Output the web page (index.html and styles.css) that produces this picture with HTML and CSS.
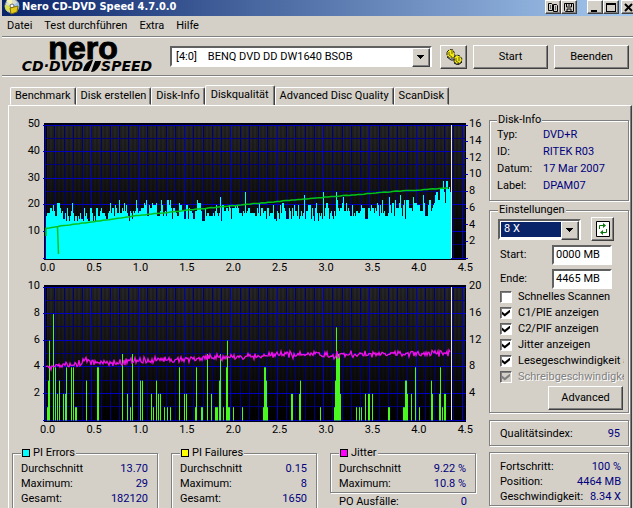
FILE: index.html
```html
<!DOCTYPE html>
<html lang="de">
<head>
<meta charset="utf-8">
<title>Nero CD-DVD Speed 4.7.0.0</title>
<link rel="stylesheet" href="styles.css">
</head>
<body>
<div class="window">
  <header class="titlebar">
    <svg class="app-icon" width="16" height="16" viewBox="0 0 16 16" aria-hidden="true">
      <circle cx="8" cy="6" r="7" fill="#d8dcc8" stroke="#8a94a0"/>
      <path d="M8 6 2 1A8 8 0 0 1 8-1Z" fill="#f4f4b0"/>
      <path d="M8 6 14 2A7 7 0 0 1 14 9Z" fill="#9fc4e8"/>
      <path d="M8 6 1 5A7 7 0 0 0 4 12Z" fill="#d8e04c"/>
      <circle cx="8" cy="6" r="2" fill="#fff" stroke="#667"/>
      <path d="M6 8 14 6 13 12 7 14Z" fill="#e4c818" stroke="#7c6c10"/>
    </svg>
    <h1 class="title">Nero CD-DVD Speed 4.7.0.0</h1>
    <div class="title-group">
      <button class="title-btn" aria-label="Kopieren"><svg width="10" height="9" viewBox="0 0 10 9"><path d="M.5.5h3l1 1v6h-4zM5.5 1.5h3l1 1v6h-4zM2 3h1M2 5h1M7 4h1M7 6h1" fill="none" stroke="#000"/></svg></button>
      <button class="title-btn" aria-label="Speichern"><svg width="10" height="9" viewBox="0 0 10 9"><path d="M.5.5h9v8h-8l-1-1zM2.500 1v3h5V1M3 8V6h4v2M4 2h2" fill="none" stroke="#000"/></svg></button>
    </div>
    <div class="title-group">
      <button class="title-btn" aria-label="Minimieren"><svg width="10" height="9" viewBox="0 0 10 9"><path d="M1 7h6v2H1z"/></svg></button>
      <button class="title-btn" aria-label="Maximieren"><svg width="10" height="9" viewBox="0 0 10 9"><path d="M0 0h10v9H0zM1 2v6h8V2z" fill-rule="evenodd"/></svg></button>
    </div>
    <button class="title-btn" aria-label="Schließen"><svg width="10" height="9" viewBox="0 0 10 9"><path d="m1 1 7 7M8 1 1 8" stroke="#000" stroke-width="2"/></svg></button>
  </header>

  <nav class="menu">
    <button>Datei</button><button>Test durchführen</button><button>Extra</button><button>Hilfe</button>
  </nav>

  <div class="toolbar">
    <div class="logo">
      <span class="logo-name">nero</span>
      <span class="logo-product"><span>CD·DVD</span><svg width="18" height="12" viewBox="0 0 18 12" aria-hidden="true"><path d="M0 11C1 5 5 0 10 0L6 11ZM8 12 12 1H18C17 7 13 12 8 12Z"/><path d="m5 12 7-12" stroke="#d4d0c8"/></svg><span>SPEED</span></span>
    </div>
    <span class="combo combo-drive"><select aria-label="Laufwerk"><option>[4:0]&nbsp;&nbsp;&nbsp; BENQ DVD DD DW1640 BSOB</option></select></span>
    <div class="toolbar-buttons">
      <button class="btn btn-icon" aria-label="Optionen"><svg width="18" height="16" viewBox="0 0 18 16"><path d="m2 3 2-2 3-1 2 3 1 4-2 2H5L2 7ZM9 8l3-2 3 1 2 3-1 4-4 1-3-2Z" fill="#f0e818" stroke="#222" stroke-dasharray="3 1"/><path d="M4 3v3l3 2M7 1v4M11 9v3l3 2M14 8v4" fill="none" stroke="#6c6408"/><path d="m2 8 4 3 4 0M9 14l4 2 4-3" fill="none" stroke="#111"/></svg></button>
      <button class="btn btn-wide">Start</button>
      <button class="btn btn-wide">Beenden</button>
    </div>
  </div>

  <div class="tabs" role="tablist">
    <button class="tab" role="tab">Benchmark</button>
    <button class="tab" role="tab">Disk erstellen</button>
    <button class="tab" role="tab">Disk-Info</button>
    <button class="tab tab-active" role="tab" aria-selected="true">Diskqualität</button>
    <button class="tab" role="tab">Advanced Disc Quality</button>
    <button class="tab" role="tab">ScanDisk</button>
  </div>

  <main class="panel">
    <div class="results">
      <div class="chart">
        <div class="axis-y axis-left"><span>50</span><span>40</span><span>30</span><span>20</span><span>10</span><span></span></div>
        <svg class="plot" id="pie-plot" viewBox="0 0 422 137" preserveAspectRatio="none" role="img" aria-label="PI Errors"></svg>
        <div class="axis-y axis-right"><span>16</span><span>14</span><span>12</span><span>10</span><span>8</span><span>6</span><span>4</span><span>2</span><span></span></div>
        <div class="axis-x"><span>0.0</span><span>0.5</span><span>1.0</span><span>1.5</span><span>2.0</span><span>2.5</span><span>3.0</span><span>3.5</span><span>4.0</span><span>4.5</span></div>
      </div>
      <div class="chart">
        <div class="axis-y axis-left"><span>10</span><span>8</span><span>6</span><span>4</span><span>2</span><span></span></div>
        <svg class="plot" id="pif-plot" viewBox="0 0 422 137" preserveAspectRatio="none" role="img" aria-label="PI Failures und Jitter"></svg>
        <div class="axis-y axis-right"><span>20</span><span>16</span><span>12</span><span>8</span><span>4</span><span></span></div>
        <div class="axis-x"><span>0.0</span><span>0.5</span><span>1.0</span><span>1.5</span><span>2.0</span><span>2.5</span><span>3.0</span><span>3.5</span><span>4.0</span><span>4.5</span></div>
      </div>
      <div class="stats">
        <fieldset class="group stat">
          <legend><i class="swatch cyan"></i>PI Errors</legend>
          <dl class="rows"><dt>Durchschnitt</dt><dd>13.70</dd><dt>Maximum:</dt><dd>29</dd><dt>Gesamt:</dt><dd>182120</dd></dl>
        </fieldset>
        <fieldset class="group stat">
          <legend><i class="swatch yellow"></i>PI Failures</legend>
          <dl class="rows"><dt>Durchschnitt</dt><dd>0.15</dd><dt>Maximum:</dt><dd>8</dd><dt>Gesamt:</dt><dd>1650</dd></dl>
        </fieldset>
        <div>
          <fieldset class="group stat">
            <legend><i class="swatch magenta"></i>Jitter</legend>
            <dl class="rows"><dt>Durchschnitt</dt><dd>9.22 %</dd><dt>Maximum:</dt><dd>10.8 %</dd></dl>
          </fieldset>
          <dl class="rows po"><dt>PO Ausfälle:</dt><dd>0</dd></dl>
        </div>
      </div>
    </div>

    <aside class="sidebar">
      <fieldset class="group disk">
        <legend>Disk-Info</legend>
        <dl class="info"><dt>Typ:</dt><dd>DVD+R</dd><dt>ID:</dt><dd>RITEK R03</dd><dt>Datum:</dt><dd>17 Mar 2007</dd><dt>Label:</dt><dd>DPAM07</dd></dl>
      </fieldset>
      <fieldset class="group settings">
        <legend>Einstellungen</legend>
        <div class="speed">
          <span class="combo combo-speed"><select aria-label="Geschwindigkeit"><option>8 X</option></select></span>
          <button class="btn btn-refresh" aria-label="Aktualisieren"><svg width="14" height="16" viewBox="0 0 14 16"><path d="M.5.5h13v15H.5z" fill="#fff" stroke="#000"/><path d="M3.500 8V4.500H8M10.500 8v3.500H6" fill="none" stroke="#087808"/><path d="m7 2 3 2.500L7 7zM7 9l-3 2.500L7 14z" fill="#087808"/></svg></button>
        </div>
        <div class="field"><label for="start">Start:</label><input id="start" type="text" value="0000 MB"></div>
        <div class="field"><label for="ende">Ende:</label><input id="ende" type="text" value="4465 MB"></div>
        <div class="checks">
          <label><input type="checkbox">Schnelles Scannen</label>
          <label><input type="checkbox" checked>C1/PIE anzeigen</label>
          <label><input type="checkbox" checked>C2/PIF anzeigen</label>
          <label><input type="checkbox" checked>Jitter anzeigen</label>
          <label><input type="checkbox" checked>Lesegeschwindigkeit anzeigen</label>
          <label class="off"><input type="checkbox" checked disabled>Schreibgeschwindigkeit anzeigen</label>
        </div>
        <button class="btn btn-wide btn-advanced">Advanced</button>
      </fieldset>
      <section class="group quality"><dl class="rows"><dt>Qualitätsindex:</dt><dd>95</dd></dl></section>
      <section class="group progress"><dl class="rows"><dt>Fortschritt:</dt><dd>100 %</dd></dl><dl class="rows"><dt>Position:</dt><dd>4464 MB</dd></dl><dl class="rows"><dt>Geschwindigkeit:</dt><dd>8.34 X</dd></dl></section>
    </aside>
  </main>
</div>
<script src="charts.js"></script>
</body>
</html>
```
FILE: styles.css
```css
* { box-sizing: border-box; }
html { background: #d4d0c8; }
body {
  margin: 0;
  color: #000;
  background: #d4d0c8;
  font: 11px/14px Roboto, "Liberation Sans", sans-serif;
}
button, select, input { margin: 0; padding: 0; font: inherit; color: inherit; border-radius: 0; }
dl, dd, h1 { margin: 0; }
svg { display: block; }

.window {
  display: flex;
  flex-direction: column;
  min-height: 100vh;
  padding-left: 2px;
  overflow: hidden;
}

/* title bar */
.titlebar {
  display: flex;
  align-items: flex-start;
  gap: 10px;
  height: 16px;
  padding-left: 2px;
  margin-right: -4px;
  overflow: hidden;
  background: linear-gradient(90deg, #0a246a, #a6caf0);
}
.app-icon { flex: none; margin-right: -8px; }
.title {
  flex: 1;
  color: #fff;
  font: bold 11px/14px "DejaVu Sans Condensed", "DejaVu Sans", sans-serif;
  white-space: nowrap;
}
.title-group { display: flex; }
.title-group + .title-btn { margin-left: -8px; }
.title-btn {
  display: flex;
  align-items: center;
  justify-content: center;
  width: 16px;
  height: 14px;
  background: #d4d0c8;
  border: 1px solid;
  border-color: #fff #404040 #404040 #fff;
  box-shadow: inset -1px -1px #808080;
}

/* menu */
.menu {
  display: flex;
  gap: 12px;
  height: 21px;
  padding: 0 5px;
  border-bottom: 1px solid #808080;
}
.menu button { background: none; border: 0; }

/* toolbar */
.toolbar {
  display: flex;
  align-items: center;
  gap: 8px;
  height: 39px;
  padding: 0 4px 0 10px;
  border-top: 1px solid #fff;
  border-bottom: 1px solid #808080;
  box-shadow: 0 1px #fff;
}
.logo {
  display: flex;
  flex-direction: column;
  align-items: center;
  width: 150px;
}
.logo-name { padding-right: 8px; font: bold 32px/18px "Liberation Sans", sans-serif; -webkit-text-stroke: 1px #000; }
.logo-product {
  display: flex;
  align-items: center;
  font: italic bold 14px/18px "DejaVu Sans", sans-serif;
}
.combo { position: relative; display: block; }
.combo select {
  display: block;
  width: 100%;
  height: 21px;
  padding-left: 4px;
  appearance: none;
  background: #fff;
  border: 2px solid;
  border-color: #606060 #fff #fff #606060;
}
.combo::after {
  content: "";
  position: absolute;
  top: 2px;
  right: 2px;
  width: 16px;
  height: 17px;
  background: linear-gradient(#000, #000) 4px 6px / 7px 1px no-repeat,
    linear-gradient(#000, #000) 5px 7px / 5px 1px no-repeat,
    linear-gradient(#000, #000) 6px 8px / 3px 1px no-repeat,
    linear-gradient(#000, #000) 7px 9px / 1px 1px no-repeat, #d4d0c8;
  border: 1px solid;
  border-color: #fff #404040 #404040 #fff;
  box-shadow: inset -1px -1px #808080;
  pointer-events: none;
}
.combo-drive { flex: 1; }
.toolbar-buttons { display: flex; gap: 6px; }

.btn {
  display: flex;
  align-items: center;
  justify-content: center;
  height: 24px;
  background: #d4d0c8;
  border: 1px solid;
  border-color: #fff #404040 #404040 #fff;
  box-shadow: inset -1px -1px #808080;
}
.btn-icon { width: 27px; }
.btn-wide { width: 75px; }
.btn-refresh { width: 23px; }

/* tabs */
.tabs {
  display: flex;
  align-items: flex-end;
  height: 29px;
  padding-left: 8px;
}
.tab {
  height: 18px;
  padding: 0 4px;
  white-space: nowrap;
  background: none;
  border: 1px solid;
  border-color: #fff #404040 transparent #fff;
  border-radius: 2px 2px 0 0;
  box-shadow: inset -1px 0 #808080;
}
.tab-active {
  height: 21px;
  margin-bottom: -1px;
  padding: 0 5px 3px;
  background: #d4d0c8;
  border-bottom: 0;
}

/* tab page */
.panel {
  flex: 1;
  display: flex;
  gap: 6px;
  margin: 0 1px 0 6px;
  padding: 0 2px 0 3px;
  border: 1px solid;
  border-color: #fff #404040 transparent #fff;
  border-bottom: 0;
  box-shadow: inset -1px 0 #808080;
}
.results { flex: 1; min-width: 0; padding-top: 17px; }
.sidebar { flex: none; width: 140px; padding-top: 8px; }

/* charts */
.chart {
  display: grid;
  grid-template-columns: 32px 1fr 17px;
  margin-bottom: 10px;
}
.plot { width: 100%; height: 137px; overflow: visible; }
.axis-y {
  display: flex;
  flex-direction: column;
  justify-content: space-between;
  margin: -5px 0 -4px;
}
.axis-y span { height: 12px; line-height: 12px; }
.axis-left { padding-right: 4px; text-align: right; }
.axis-right { padding-left: 3px; }
.axis-x {
  grid-column: 1 / -1;
  display: flex;
  justify-content: space-between;
  padding: 1px 10px 0 28px;
}

/* group boxes */
.group {
  min-width: 0;
  margin: 0;
  padding: 0 8px;
  border: 1px solid #808080;
  box-shadow: 1px 1px #fff, inset 1px 1px #fff;
}
.group legend {
  display: flex;
  align-items: center;
  gap: 3px;
  padding: 0 1px;
  line-height: 12px;
  background: #d4d0c8;
}
.rows { display: grid; grid-template-columns: auto 1fr; line-height: 15px; white-space: nowrap; }
.rows dd { color: #00007c; text-align: right; }
.stats {
  display: grid;
  grid-template-columns: 1fr 1fr 1fr;
  gap: 13px;
  padding-right: 7px;
}
.stat { padding: 2px 8px 1px; }
.stat .rows { margin-right: 1px; }
.po { padding: 1px 9px 0; }
.swatch { width: 8px; height: 8px; border: 1px solid #000; }
.cyan { background: #0ff; }
.yellow { background: #ff0; }
.magenta { background: #f0f; }

.disk { padding: 0 7px 6px; }
.settings { margin-top: 3px; padding: 1px 4px 2px 8px; }
.info { display: grid; grid-template-columns: 46px 1fr; line-height: 17px; }
.info dd { color: #00007c; }
.speed { display: flex; align-items: center; gap: 10px; }
.combo-speed { width: 83px; }
.combo-speed select { color: #fff; background: #0a246a; box-shadow: inset 0 0 0 1px #fff; }
.field {
  display: flex;
  align-items: center;
  justify-content: space-between;
  margin: 4px 12px 0 2px;
}
.field input {
  width: 60px;
  height: 20px;
  padding: 0 2px 2px;
  background: #fff;
  border: 2px solid;
  border-color: #606060 #fff #fff #606060;
}
.checks { padding-left: 2px; overflow: hidden; }
.checks label {
  display: flex;
  align-items: center;
  gap: 6px;
  height: 16px;
  white-space: nowrap;
}
.checks input {
  flex: none;
  display: grid;
  place-items: center;
  width: 12px;
  height: 12px;
  appearance: none;
  background: #fff;
  border: 1px solid;
  border-color: #606060 #fff #fff #606060;
  box-shadow: inset 1px 1px #808080;
}
.checks input:checked::after {
  content: "";
  width: 8px;
  height: 7px;
  background: currentColor;
  clip-path: polygon(0 30%, 35% 62%, 100% 0, 100% 38%, 35% 100%, 0 68%);
}
.checks .off { color: #808080; text-shadow: 1px 1px #fff; }
.checks .off input { background: #d4d0c8; }
.btn-advanced { margin: 1px 1px 0 auto; }
.quality { margin-top: 7px; padding: 5px 8px 4px 10px; }
.progress { margin-top: 6px; padding: 6px 7px 1px 10px; }
```
FILE: charts.js
```js
const NS = 'http://www.w3.org/2000/svg';
const LEFT = 2, TOP = 2.5, BOTTOM = 135.5, END = 408;
const HEIGHT = BOTTOM - TOP;

function add(parent, name, attrs) {
  const el = document.createElementNS(NS, name);
  for (const key in attrs) el.setAttribute(key, attrs[key]);
  parent.appendChild(el);
  return el;
}

function random(seed) {
  return () => {
    seed = (seed * 1664525 + 1013904223) % 4294967296;
    return seed / 4294967296;
  };
}

// Linear interpolation through [x, value] pairs.
function curve(points, x) {
  for (let i = 1; i < points.length; i++) {
    const [x0, v0] = points[i - 1], [x1, v1] = points[i];
    if (x <= x1) return v0 + (v1 - v0) * (x - x0) / (x1 - x0);
  }
  return points[points.length - 1][1];
}

function grid(svg) {
  const id = svg.id + '-shade';
  const shade = add(add(svg, 'defs', {}), 'linearGradient', { id, x2: 0, y2: 1 });
  add(shade, 'stop', { offset: 0, 'stop-color': '#262626' });
  add(shade, 'stop', { offset: 1, 'stop-color': '#000' });
  add(svg, 'rect', { width: 422, height: 137, fill: '#000010' });
  add(svg, 'rect', { x: 3, y: 3, width: 418, height: 132, fill: `url(#${id})` });
  let minor = '', major = '', stripes = '';
  for (let x = 5; x < 420; x += 4) stripes += `M${x} 3V135`;
  for (let i = 0; i <= 45; i++) {
    const x = Math.round(LEFT + i * 9.27) - 0.5;
    if (i % 5) minor += `M${x} 3V135`; else major += `M${x} 3V135`;
  }
  for (let i = 0; i <= 10; i++) {
    const y = Math.round(TOP + i * HEIGHT / 10) - 0.5;
    if (i % 2) minor += `M2 ${y}H421`; else major += `M-1 ${y}H422`;
  }
  add(svg, 'path', { d: stripes, stroke: '#000', 'stroke-opacity': 0.35 });
  add(svg, 'path', { d: minor, stroke: '#000078' });
  add(svg, 'path', { d: major, stroke: '#0000c0' });
}

function endMarker(svg) {
  add(svg, 'path', { d: `M${END - 0.5} 2V135`, stroke: '#e8e8d8' });
}

function drawErrors() {
  const svg = document.getElementById('pie-plot');
  const rnd = random(77);
  grid(svg);
  let ticks = '';
  for (let i = 0; i <= 8; i++) ticks += `M421 ${Math.round(TOP + i * HEIGHT / 8) - 0.5}h3`;
  add(svg, 'path', { d: ticks, stroke: '#0000c0' });
  const base = [[0, 17], [14, 19], [20, 15.5], [45, 15.5], [60, 16.5], [75, 19], [85, 16.5], [95, 19], [120, 18],
    [150, 17], [163, 15.5], [180, 18], [230, 17], [280, 17.5], [345, 18], [375, 19], [390, 20], [398, 24], [407, 26]];
  const peaks = { 28: 21, 66: 21, 75: 22, 92: 22, 108: 21, 126: 22, 153: 22, 176: 23, 201: 25, 260: 24, 279: 25,
    292: 25, 299: 23, 345: 23, 356: 24, 369: 23, 379: 24, 392: 25, 399: 29, 404: 26 };
  let d = `M${LEFT} ${BOTTOM}`;
  let value = 17;
  for (let x = LEFT; x < END - 1; x++) {
    if (rnd() > 0.2) value = Math.max(14, Math.round(curve(base, x) + (rnd() + rnd() - 1) * 4.6));
    const y = BOTTOM - (peaks[x] || value) * HEIGHT / 50;
    d += `V${y.toFixed(1)}h1`;
  }
  add(svg, 'path', { d: d + `V${BOTTOM}Z`, fill: '#0ff', 'shape-rendering': 'crispEdges' });

  const speed = [[2, 105.5], [14, 103.5], [48, 99], [94, 92.5], [140, 87.5], [206, 81], [296, 73], [350, 68.5], [405, 65]];
  let line = `M${LEFT} 113V105.5`;
  for (let x = LEFT; x < 407; x += 3) line += `L${x} ${(curve(speed, x) + rnd() * 0.6 - 0.3).toFixed(1)}`;
  add(svg, 'path', { d: line, fill: 'none', stroke: '#00c41c', 'stroke-width': 1.5 });
  add(svg, 'path', { d: 'M13.5 104L14.5 131', stroke: '#00c41c', 'stroke-width': 1.5 });
  endMarker(svg);
}

function drawFailures() {
  const svg = document.getElementById('pif-plot');
  const rnd = random(5);
  grid(svg);
  const bars = [[3, 1], [4, 3], [5, 6], [9, 8], [11, 4], [13, 2], [15, 3], [19, 2], [21, 2], [22, 4], [27, 4], [29, 4],
    [31, 1], [32, 1], [42, 3], [53, 4], [54, 4], [78, 5], [83, 2], [86, 1], [88, 5], [96, 3], [98, 3], [107, 2],
    [109, 1], [112, 3], [114, 2], [116, 2], [120, 1], [123, 1], [126, 1], [135, 4], [140, 2], [142, 2], [151, 1],
    [152, 4], [157, 1], [158, 1], [163, 5], [167, 2], [171, 1], [172, 1], [173, 1], [175, 3], [176, 5], [179, 1],
    [182, 4], [183, 6], [184, 1], [185, 1], [189, 1], [198, 1], [219, 1], [220, 4], [221, 4], [222, 3], [223, 1],
    [247, 2], [248, 2], [255, 2], [256, 3], [276, 1], [290, 1], [291, 3], [292, 7], [293, 5], [294, 5], [295, 5],
    [296, 2], [312, 1], [315, 1], [317, 1], [321, 2], [324, 2], [325, 2], [328, 2], [344, 1], [345, 1], [359, 1],
    [360, 1], [361, 3], [362, 3], [363, 2], [367, 2], [371, 4], [375, 1], [387, 3], [388, 2], [395, 2], [396, 4],
    [398, 1], [400, 2], [401, 2]];
  let d = '';
  for (const [x, v] of bars) d += `M${x + 0.5} ${BOTTOM}V${(BOTTOM - v * HEIGHT / 10).toFixed(1)}`;
  add(svg, 'path', { d, stroke: '#48f820' });

  const jitter = [[2, 4.05], [16, 4.1], [24, 4.3], [36, 4.25], [41, 4.6], [46, 4.4], [60, 4.45], [72, 4.3], [84, 4.5],
    [100, 4.5], [130, 4.6], [160, 4.65], [190, 4.8], [210, 4.8], [225, 4.95], [245, 4.9], [270, 5], [290, 4.9],
    [340, 5.05], [372, 5.05], [407, 5.1]];
  let line = '';
  for (let x = LEFT; x < 407; x++) {
    const v = curve(jitter, x) + (rnd() + rnd() - 1) * 0.32;
    line += `${line ? 'L' : 'M'}${x} ${(BOTTOM - v * HEIGHT / 10).toFixed(1)}`;
  }
  add(svg, 'path', { d: line, fill: 'none', stroke: '#f010e8', 'stroke-width': 1.3 });
  endMarker(svg);
}

drawErrors();
drawFailures();
```
